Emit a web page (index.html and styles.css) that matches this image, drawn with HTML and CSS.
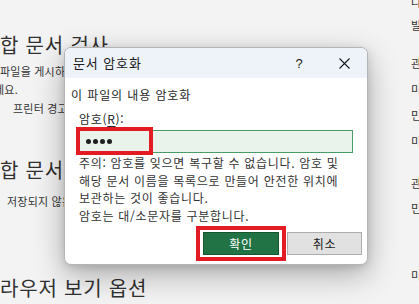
FILE: index.html
```html
<!DOCTYPE html>
<html lang="ko">
<head>
<meta charset="utf-8">
<title>문서 암호화</title>
<link rel="stylesheet" href="styles.css">
</head>
<body>
<div class="page">
  <div class="main">
    <h2 class="heading h1">합 문서 검사</h2>
    <p class="line">파일을 게시하기 전에 다음 항목을 확인하세요.</p>
    <p class="line shift">세요.</p>
    <p class="line indent">프린터 경고 및 숨겨진 속성</p>
    <h2 class="heading h2">합 문서 관리</h2>
    <p class="line indent2">저장되지 않은 변경 내용이 없습니다.</p>
    <h2 class="heading h3">라우저 보기 옵션</h2>
  </div>
  <div class="side">
    <div class="grp g1"><p>나</p><p>발</p></div>
    <div class="grp g2"><p>관</p><p>미</p><p>민</p><p>미</p></div>
    <div class="grp g3"><p>관</p><p>민</p></div>
    <div class="grp g4"><p>미</p></div>
  </div>
</div>

<div class="dialog">
  <div class="titlebar">
    <span class="title">문서 암호화</span>
    <span class="tb-btn help">?</span>
    <span class="tb-btn close">
      <svg width="11" height="11" viewBox="0 0 11 11"><path d="M0.5 0.5 L10.5 10.5 M10.5 0.5 L0.5 10.5" stroke="#1a1a1a" stroke-width="1.1" fill="none"/></svg>
    </span>
  </div>
  <div class="body">
    <div class="section">이 파일의 내용 암호화</div>
    <div class="label">암호(<u>R</u>):</div>
    <div class="field">
      <div class="input">
        <span class="dots"><i></i><i></i><i></i><i></i></span>
      </div>
      <div class="mark mark-input"></div>
    </div>
    <div class="note">주의: 암호를 잊으면 복구할 수 없습니다. 암호 및<br>해당 문서 이름을 목록으로 만들어 안전한 위치에<br>보관하는 것이 좋습니다.<br>암호는 대/소문자를 구분합니다.</div>
    <div class="buttons">
      <div class="okwrap">
        <button class="btn ok">확인</button>
        <div class="mark mark-ok"></div>
      </div>
      <button class="btn cancel">취소</button>
    </div>
  </div>
</div>
</body>
</html>
```

FILE: styles.css
```css
html, body {
  margin: 0;
  padding: 0;
}
body {
  width: 419px;
  height: 304px;
  overflow: hidden;
  background: #f3f3f3;
  font-family: "Noto Sans CJK KR", "Noto Sans", sans-serif;
  color: #262626;
  position: relative;
}
p, h2 { margin: 0; font-weight: normal; }

.page {
  display: grid;
  grid-template-columns: 411px 40px;
  height: 304px;
}
.main {
  overflow: hidden;
  white-space: nowrap;
}
.heading {
  font-size: 20px;
  line-height: 24px;
  color: #303030;
  letter-spacing: 0.8px;
}
.h1 { margin-top: 33px; }
.h2 { margin-top: 41px; }
.h3 { margin-top: 66px; }
.line {
  font-size: 11px;
  line-height: 18px;
  color: #333;
  letter-spacing: 0.2px;
}
.h1 + .line { margin-top: 5px; }
.shift { margin-left: -6px; }
.indent { margin-left: 13px; margin-top: 1px; }
.indent2 { margin-left: 7px; margin-top: 10px; }

.side {
  font-size: 11.5px;
  color: #333;
  white-space: nowrap;
}
.side p { line-height: 24px; }
.g1 { margin-top: -10px; }
.g1 p:nth-child(2) { margin-top: -1px; }
.g2 { margin-top: 13px; }
.g2 p { line-height: 26px; }
.g3 { margin-top: 17px; }
.g3 p { line-height: 25px; }
.g4 { margin-top: 42px; }

/* dialog */
.dialog {
  position: absolute;
  left: 64px;
  top: 47px;
  width: 302px;
  height: 216px;
  border: 1px solid #b4b4b4;
  border-radius: 7px;
  background: #fff;
  box-shadow: 0 10px 30px rgba(0,0,0,0.3), 0 2px 8px rgba(0,0,0,0.12);
  overflow: hidden;
  display: flex;
  flex-direction: column;
  letter-spacing: 0.7px;
}
.titlebar {
  height: 30px;
  background: #eef2f9;
  display: flex;
  align-items: center;
}
.title {
  flex: 1;
  padding-left: 8px;
  font-size: 13px;
  color: #1a1a1a;
  line-height: 30px;
  letter-spacing: 0.9px;
}
.tb-btn {
  width: 45px;
  height: 30px;
  display: flex;
  align-items: center;
  justify-content: center;
  font-size: 13px;
  color: #1a1a1a;
}
.help { font-family: "Liberation Sans", sans-serif; }

.body {
  padding: 8px 5px 9px 6px;
  flex: 1;
  display: flex;
  flex-direction: column;
}
.section {
  font-size: 12px;
  line-height: 18px;
  color: #262626;
  letter-spacing: 0.9px;
}
.label {
  margin: 7px 0 0 8px;
  font-size: 12px;
  line-height: 16px;
  color: #262626;
}
.label u { text-underline-offset: 2px; }
.field {
  position: relative;
  margin: 3px 0 0 6px;
  width: 276px;
}
.input {
  height: 21px;
  border: 1px solid #4a9b68;
  background: #e9f3ec;
  display: flex;
  align-items: center;
  padding-left: 8px;
}
.dots { display: flex; gap: 2px; }
.dots i {
  width: 5px;
  height: 5px;
  border-radius: 50%;
  background: #1e1e1e;
}
.mark {
  position: absolute;
  border: 4px solid #e31b23;
  pointer-events: none;
}
.mark-input {
  left: -1px;
  top: -3px;
  width: 69px;
  height: 20px;
}
.note {
  margin: 1px 0 0 8px;
  font-size: 12px;
  line-height: 17.5px;
  color: #333;
}
.buttons {
  margin-top: auto;
  display: flex;
  justify-content: flex-end;
  gap: 8px;
}
.okwrap { position: relative; }
.btn {
  font-family: "Noto Sans CJK KR", sans-serif;
  font-size: 12px;
  letter-spacing: 0.7px;
  height: 23px;
  padding: 0;
  margin: 0;
  display: flex;
  align-items: center;
  justify-content: center;
}
.ok {
  width: 76px;
  background: #217346;
  border: 1px solid #17552f;
  color: #fff;
}
.cancel {
  width: 75px;
  background: #e1e1e1;
  border: 1px solid #adadad;
  color: #1a1a1a;
}
.mark-ok {
  left: -7px;
  top: -6px;
  width: 82px;
  height: 27px;
}
```
